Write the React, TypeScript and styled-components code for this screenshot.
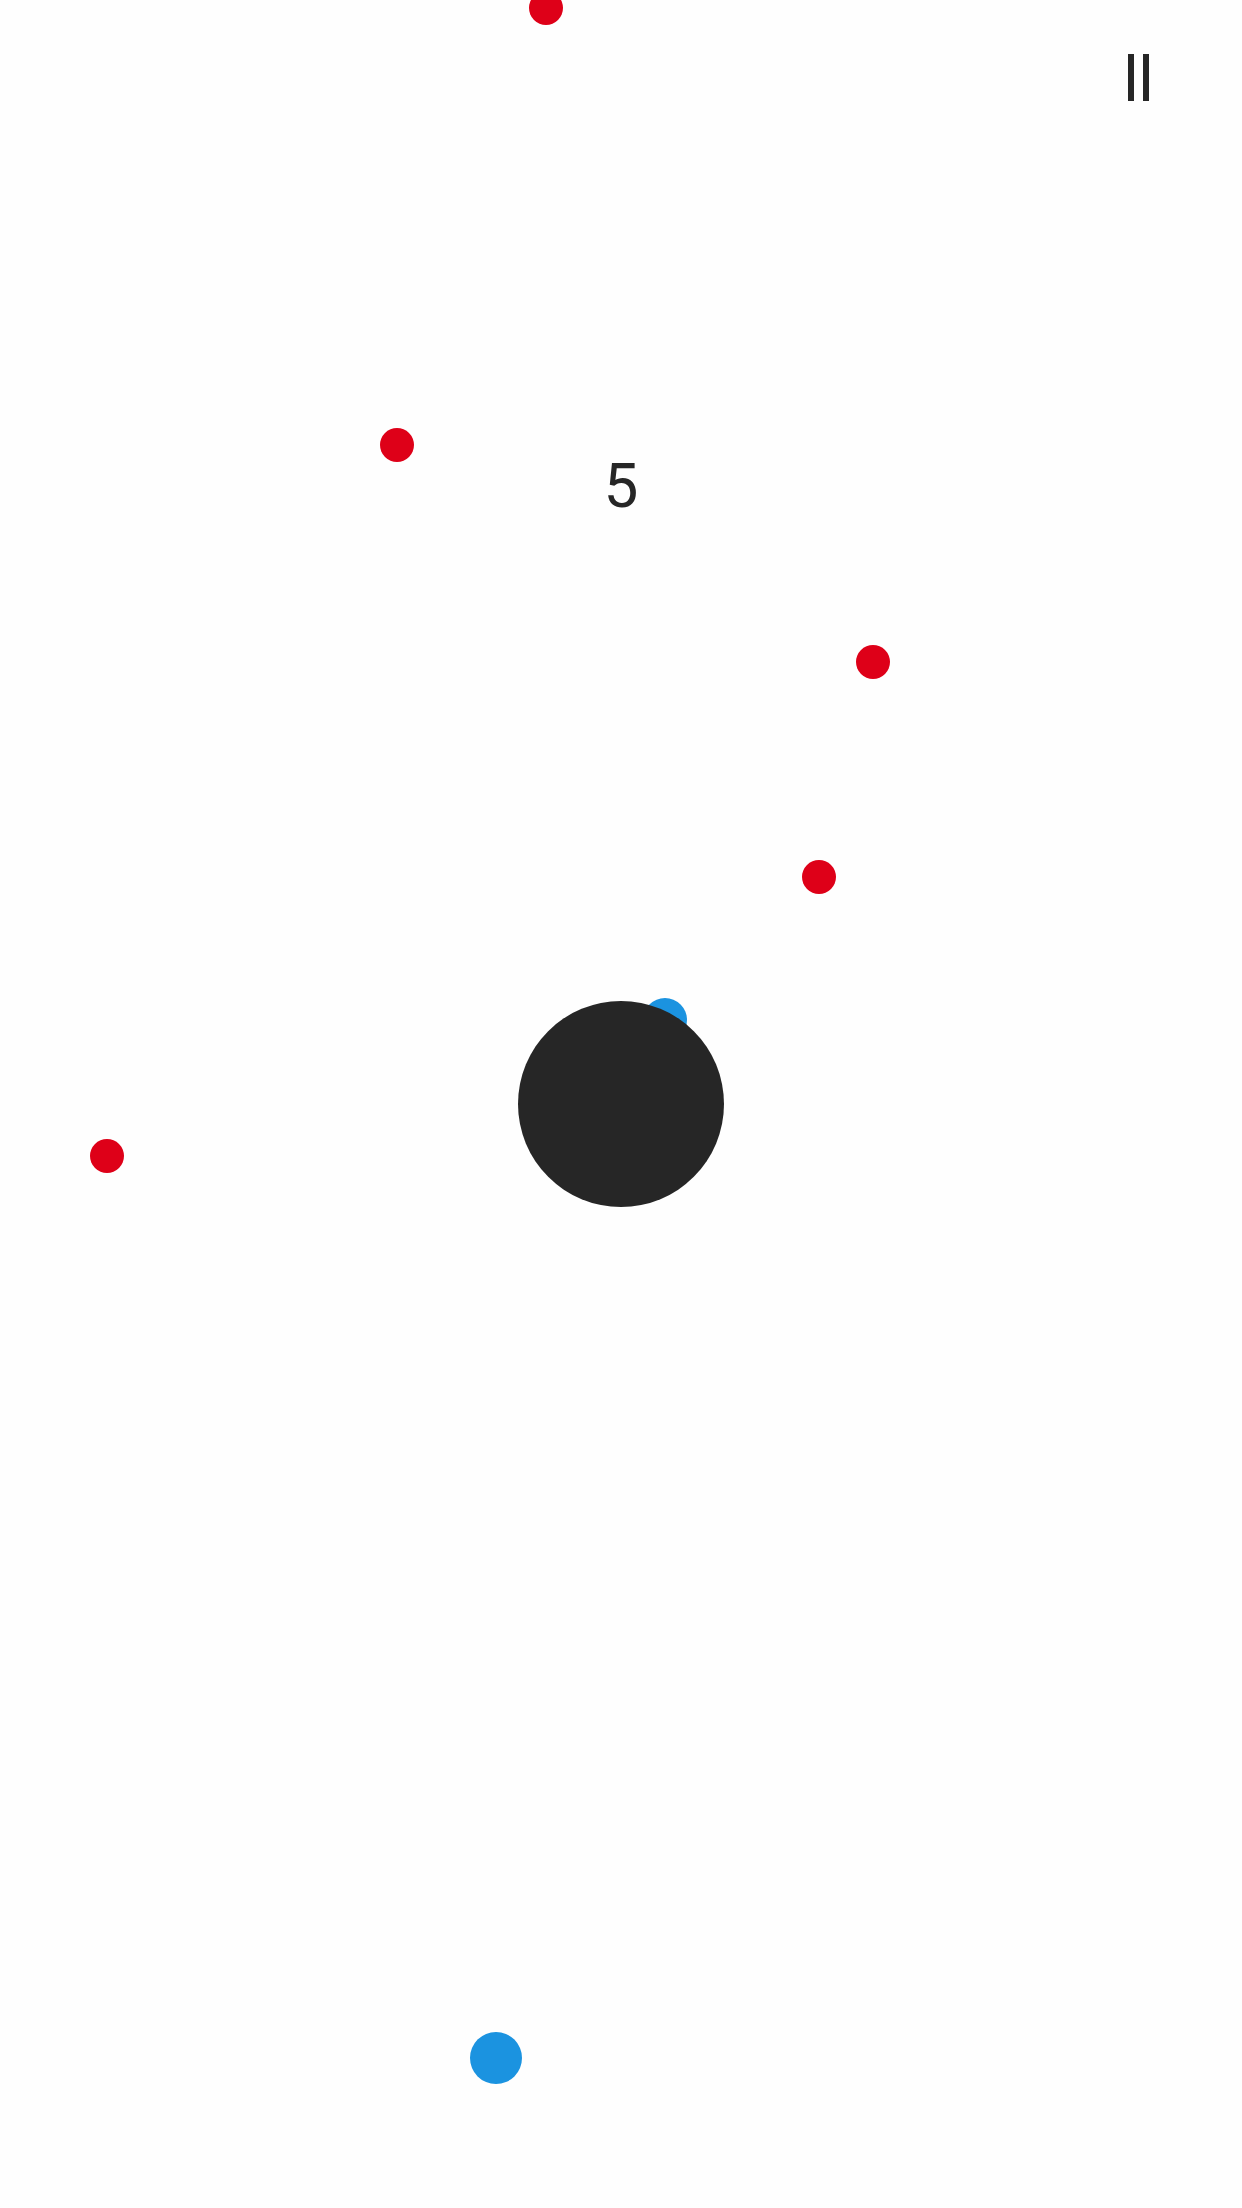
import React from "react";
import styled, { createGlobalStyle } from "styled-components";

const GlobalStyle = createGlobalStyle`
  html, body {
    margin: 0;
    padding: 0;
    background: #fefefe;
  }
`;

type Dot = { x: number; y: number };

// enemy dots on the field (centre coords)
const enemies: Dot[] = [
  { x: 546, y: 8 },
  { x: 397, y: 445 },
  { x: 873, y: 662 },
  { x: 819, y: 877 },
  { x: 107, y: 1156 },
];

const App = () => {
  return (
    <>
      <GlobalStyle />
      <Screen>
        <TopBar>
          <PauseButton aria-label="pause">
            <Bar />
            <Bar />
          </PauseButton>
        </TopBar>

        <Score>5</Score>

        {enemies.map((d, i) => (
          <RedDot key={i} style={{ left: d.x, top: d.y }} />
        ))}

        <Orbiter style={{ left: 665, top: 1020 }} />
        <Core />
        <Player style={{ left: 496, top: 2058 }} />
      </Screen>
    </>
  );
};

export default App;

const Screen = styled.div`
  position: relative;
  width: 1242px;
  height: 2208px;
  overflow: hidden;
  background: #fefefe;
  font-family: Roboto, "Liberation Sans", sans-serif;
`;

const TopBar = styled.div`
  display: flex;
  justify-content: flex-end;
  padding: 54px 93px 0 0;
`;

const PauseButton = styled.div`
  display: flex;
  gap: 9px;
  height: 47px;
`;

const Bar = styled.span`
  display: block;
  width: 6px;
  height: 100%;
  background: #262626;
`;

const Score = styled.div`
  position: absolute;
  left: 0;
  right: 0;
  top: 450px;
  text-align: center;
  font-size: 62px;
  line-height: 72px;
  color: #262626;
`;

const Circle = styled.div<{ $size: number; $color: string }>`
  position: absolute;
  width: ${(p) => p.$size}px;
  height: ${(p) => p.$size}px;
  margin-left: ${(p) => -p.$size / 2}px;
  margin-top: ${(p) => -p.$size / 2}px;
  border-radius: 50%;
  background: ${(p) => p.$color};
`;

const RedDot = styled(Circle).attrs({ $size: 34, $color: "#de0018" })``;

const Orbiter = styled(Circle).attrs({ $size: 44, $color: "#1b93e0" })``;

const Player = styled(Circle).attrs({ $size: 52, $color: "#1b93e0" })``;

const Core = styled.div`
  position: absolute;
  left: 518px;
  top: 1001px;
  width: 206px;
  height: 206px;
  border-radius: 50%;
  background: #262626;
`;
